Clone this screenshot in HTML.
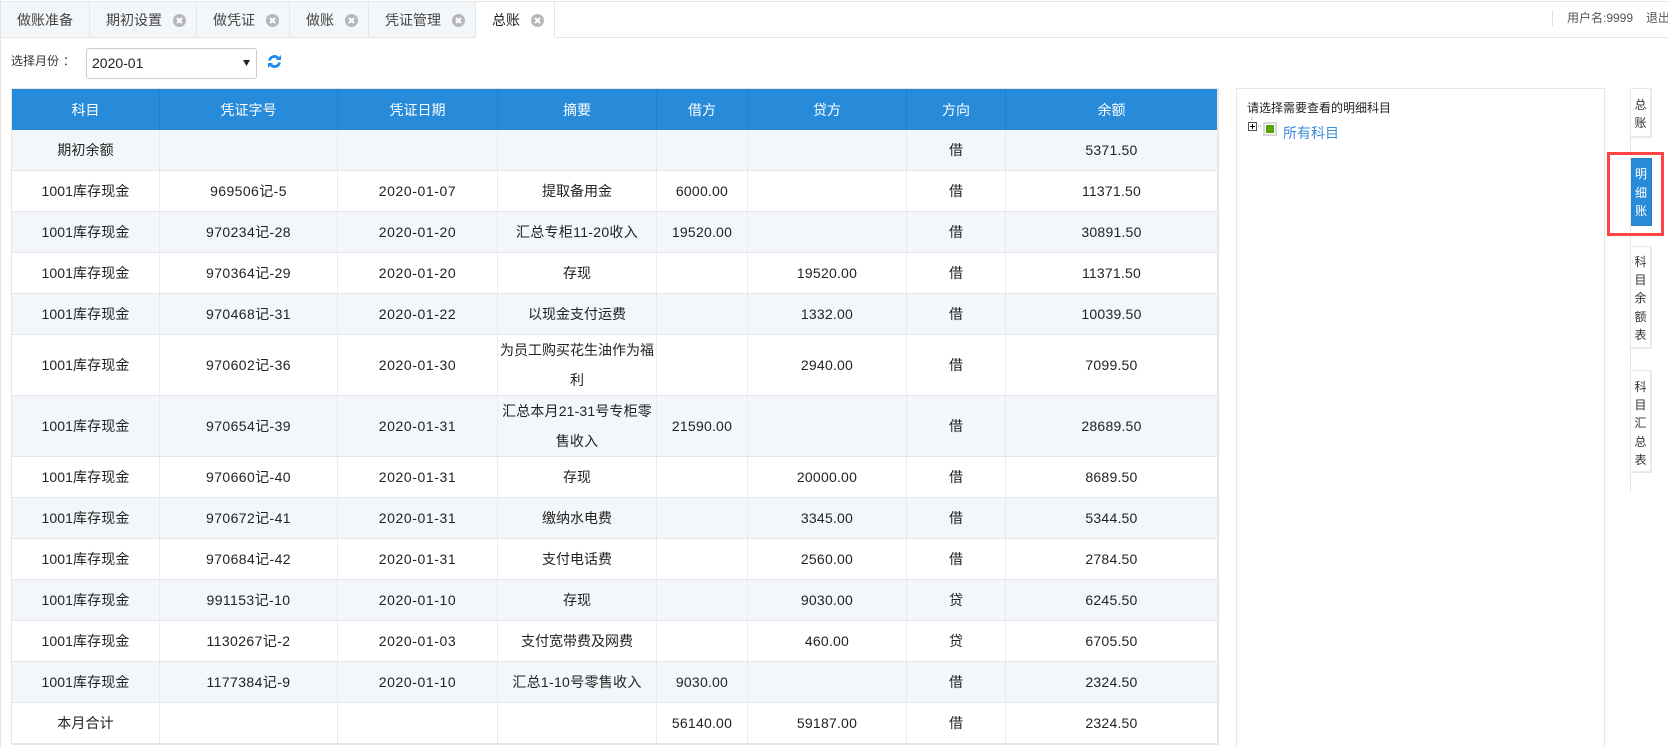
<!DOCTYPE html>
<html lang="zh">
<head>
<meta charset="utf-8">
<title>总账</title>
<style>
html,body{margin:0;padding:0;width:1668px;height:747px;overflow:hidden;background:#fff;}
body{position:relative;font-family:"Liberation Sans","Noto Sans CJK SC",sans-serif;font-size:14px;color:#333;}
.a{position:absolute;}
.tabbar{left:0;top:1px;width:1668px;height:35px;border-top:1px solid #e6e6e6;border-bottom:1px solid #e6e6e6;}
.tab{position:absolute;top:2px;height:35px;background:#f4f7fa;border-right:1px solid #e6e6e6;box-sizing:border-box;}
.tab.on{background:#fff;height:36px;}
.tl{position:absolute;top:12px;line-height:16px;font-size:14px;white-space:nowrap;color:#444;}
.x{position:absolute;top:14px;width:13px;height:13px;}
table{position:absolute;left:11px;top:88px;width:1205px;table-layout:fixed;border-collapse:separate;border-spacing:0;border:1px solid #e6e6e6;border-bottom-width:2px;border-right-width:2px;box-sizing:content-box;}
td,th{padding:0 1px;text-align:center;font-weight:normal;font-size:14px;color:#222;box-sizing:border-box;border-right:1px solid #e9ebee;border-bottom:1px solid #e3e6ea;height:41px;line-height:30px;}
th{background:#288bda;color:#fff;border-right:1px solid #2580c8;border-bottom:0;height:41px;}
tr:nth-child(even) td{background:#f3f7fa;}
tr.d td{height:61px;}
td:last-child,th:last-child{border-right:0;}
tr:last-child td{border-bottom:0;height:40px;}
td:nth-child(1){letter-spacing:.1px;}
td:nth-child(2){letter-spacing:.4px;}
td:nth-child(3){letter-spacing:.6px;}
td:nth-child(5),td:nth-child(6),td:nth-child(8){letter-spacing:.22px;}
.st{position:absolute;left:1630px;width:22px;box-sizing:border-box;border:2px solid #e9e9e9;border-left-width:1px;border-top-width:1px;text-align:center;font-size:12px;line-height:18px;color:#333;background:#fff;}
</style>
</head>
<body>
<div class="a" style="left:0;top:0;width:1px;height:747px;background:#e6e6e6"></div>
<div class="a tabbar"></div>
<div class="tab" style="left:1px;width:89px"></div>
<div class="tab" style="left:90px;width:107px"></div>
<div class="tab" style="left:197px;width:93px"></div>
<div class="tab" style="left:290px;width:79px"></div>
<div class="tab" style="left:369px;width:107px"></div>
<div class="tab on" style="left:476px;width:79px"></div>
<span class="tl" style="left:17px">做账准备</span>
<span class="tl" style="left:106px">期初设置</span>
<span class="tl" style="left:213px">做凭证</span>
<span class="tl" style="left:306px">做账</span>
<span class="tl" style="left:385px">凭证管理</span>
<span class="tl" style="left:492px;color:#222">总账</span>
<svg class="x" style="left:173px" viewBox="0 0 13 13"><circle cx="6.5" cy="6.5" r="6.5" fill="#b5b7ba"/><path d="M4 4l5 5M9 4l-5 5" stroke="#fff" stroke-width="2"/></svg>
<svg class="x" style="left:266px" viewBox="0 0 13 13"><circle cx="6.5" cy="6.5" r="6.5" fill="#b5b7ba"/><path d="M4 4l5 5M9 4l-5 5" stroke="#fff" stroke-width="2"/></svg>
<svg class="x" style="left:345px" viewBox="0 0 13 13"><circle cx="6.5" cy="6.5" r="6.5" fill="#b5b7ba"/><path d="M4 4l5 5M9 4l-5 5" stroke="#fff" stroke-width="2"/></svg>
<svg class="x" style="left:452px" viewBox="0 0 13 13"><circle cx="6.5" cy="6.5" r="6.5" fill="#b5b7ba"/><path d="M4 4l5 5M9 4l-5 5" stroke="#fff" stroke-width="2"/></svg>
<svg class="x" style="left:531px" viewBox="0 0 13 13"><circle cx="6.5" cy="6.5" r="6.5" fill="#b5b7ba"/><path d="M4 4l5 5M9 4l-5 5" stroke="#fff" stroke-width="2"/></svg>

<div class="a" style="left:1552px;top:10px;width:1px;height:16px;background:#e0e0e0"></div>
<span class="a" style="left:1567px;top:10px;font-size:12px;line-height:16px;color:#555;white-space:nowrap">用户名:9999</span>
<span class="a" style="left:1646px;top:10px;font-size:12px;line-height:16px;color:#555;white-space:nowrap">退出</span>

<span class="a" style="left:11px;top:53px;font-size:12px;line-height:16px;color:#333;white-space:nowrap">选择月份<span style="margin-left:4px">：</span></span>
<div class="a" style="left:86px;top:48px;width:171px;height:31px;box-sizing:border-box;border:1px solid #ccc;border-radius:3px;background:#fff">
  <span class="a" style="left:5px;top:6px;line-height:16px;color:#222">2020-01</span>
  <svg class="a" style="left:156px;top:11px" width="7" height="6" viewBox="0 0 7 6"><path d="M0 0h7L3.500 6z" fill="#222"/></svg>
</div>
<svg class="a" style="left:268px;top:55px" width="13" height="13" viewBox="0 0 13 13" fill="none">
  <path d="M1.500 5.500A5 5 0 0 1 10 3" stroke="#1e88f0" stroke-width="2.800"/>
  <path d="M8 5h5V0z" fill="#1e88f0"/>
  <path d="M11.500 7.500A5 5 0 0 1 3 10" stroke="#1e88f0" stroke-width="2.800"/>
  <path d="M5 8H0v5z" fill="#1e88f0"/>
</svg>

<table>
<colgroup><col style="width:148px"><col style="width:178px"><col style="width:160px"><col style="width:159px"><col style="width:91px"><col style="width:159px"><col style="width:99px"><col style="width:211px"></colgroup>
<tbody>
<tr><th>科目</th><th>凭证字号</th><th>凭证日期</th><th>摘要</th><th>借方</th><th>贷方</th><th>方向</th><th>余额</th></tr>
<tr><td>期初余额</td><td></td><td></td><td></td><td></td><td></td><td>借</td><td>5371.50</td></tr>
<tr><td>1001库存现金</td><td>969506记-5</td><td>2020-01-07</td><td>提取备用金</td><td>6000.00</td><td></td><td>借</td><td>11371.50</td></tr>
<tr><td>1001库存现金</td><td>970234记-28</td><td>2020-01-20</td><td style="letter-spacing:.3px">汇总专柜11-20收入</td><td>19520.00</td><td></td><td>借</td><td>30891.50</td></tr>
<tr><td>1001库存现金</td><td>970364记-29</td><td>2020-01-20</td><td>存现</td><td></td><td>19520.00</td><td>借</td><td>11371.50</td></tr>
<tr><td>1001库存现金</td><td>970468记-31</td><td>2020-01-22</td><td>以现金支付运费</td><td></td><td>1332.00</td><td>借</td><td>10039.50</td></tr>
<tr class="d"><td>1001库存现金</td><td>970602记-36</td><td>2020-01-30</td><td>为员工购买花生油作为福<br>利</td><td></td><td>2940.00</td><td>借</td><td>7099.50</td></tr>
<tr class="d"><td>1001库存现金</td><td>970654记-39</td><td>2020-01-31</td><td style="letter-spacing:.15px">汇总本月21-31号专柜零<br>售收入</td><td>21590.00</td><td></td><td>借</td><td>28689.50</td></tr>
<tr><td>1001库存现金</td><td>970660记-40</td><td>2020-01-31</td><td>存现</td><td></td><td>20000.00</td><td>借</td><td>8689.50</td></tr>
<tr><td>1001库存现金</td><td>970672记-41</td><td>2020-01-31</td><td>缴纳水电费</td><td></td><td>3345.00</td><td>借</td><td>5344.50</td></tr>
<tr><td>1001库存现金</td><td>970684记-42</td><td>2020-01-31</td><td>支付电话费</td><td></td><td>2560.00</td><td>借</td><td>2784.50</td></tr>
<tr><td>1001库存现金</td><td>991153记-10</td><td>2020-01-10</td><td>存现</td><td></td><td>9030.00</td><td>贷</td><td>6245.50</td></tr>
<tr><td>1001库存现金</td><td>1130267记-2</td><td>2020-01-03</td><td>支付宽带费及网费</td><td></td><td>460.00</td><td>贷</td><td>6705.50</td></tr>
<tr><td>1001库存现金</td><td>1177384记-9</td><td>2020-01-10</td><td style="letter-spacing:.3px">汇总1-10号零售收入</td><td>9030.00</td><td></td><td>借</td><td>2324.50</td></tr>
<tr><td>本月合计</td><td></td><td></td><td></td><td>56140.00</td><td>59187.00</td><td>借</td><td>2324.50</td></tr>
</tbody>
</table>

<div class="a" style="left:1236px;top:88px;width:369px;height:659px;box-sizing:border-box;border:1px solid #e6e6e6;border-bottom:0"></div>
<span class="a" style="left:1247px;top:100px;font-size:12px;line-height:16px;color:#222">请选择需要查看的明细科目</span>
<svg class="a" style="left:1248px;top:117px" width="16" height="14" viewBox="0 0 16 14" fill="none">
  <path d="M4 0v4M10 9h4" stroke="#999" stroke-dasharray="1 1"/>
  <rect x="0.500" y="5.500" width="8" height="8" stroke="#555" fill="#fff"/>
  <path d="M2 9.500h5M4.500 7v5" stroke="#000"/>
</svg>
<div class="a" style="left:1263px;top:122px;width:14px;height:14px;box-sizing:border-box;border:2px solid #d8d8d8;background:#fff"><div class="a" style="left:1px;top:1px;width:8px;height:8px;background:#58a500"></div></div>
<span class="a" style="left:1283px;top:125px;line-height:16px;color:#3c8dde">所有科目</span>

<div class="a" style="left:1630px;top:88px;width:1px;height:405px;background:#e6e6e6"></div>
<div class="st" style="top:88px;height:50px;padding-top:7px">总<br>账</div>
<div class="a" style="left:1631px;top:158px;width:21px;height:68px;box-sizing:border-box;background:#288bda;border:1px solid #2a7dbf;border-left:0;color:#fff;font-size:12px;line-height:18.5px;text-align:center;padding-top:6px">明<br>细<br>账</div>
<div class="st" style="top:246px;height:103px;padding-top:6px;line-height:18.200px">科<br>目<br>余<br>额<br>表</div>
<div class="st" style="top:370px;height:103px;padding-top:7px;line-height:18.200px">科<br>目<br>汇<br>总<br>表</div>
<div class="a" style="left:1607px;top:152px;width:57px;height:84px;box-sizing:border-box;border:3px solid #f44;"></div>
</body>
</html>
